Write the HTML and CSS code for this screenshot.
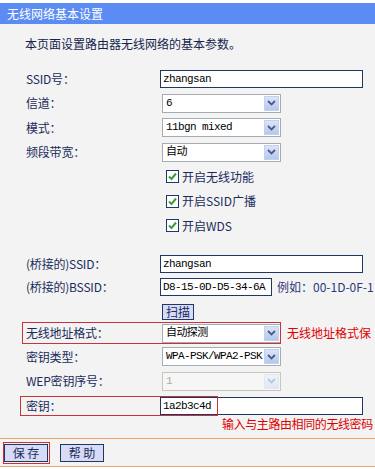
FILE: index.html
```html
<!DOCTYPE html>
<html>
<head lang="zh-CN">
    <meta charset="UTF-8">
    <title>无线网络基本设置</title>
    <link rel="stylesheet" href="styles.css">
</head>
<body>
    <div id="page">
        <div class="title">无线网络基本设置</div>
        <p class="intro">本页面设置路由器无线网络的基本参数。</p>

        <div class="form">
            <div class="row"><span class="label">SSID号：</span><span class="input wide mono">zhangsan</span></div>
            <div class="row"><span class="label">信道：</span>
                <span class="select mono"><span class="val">6</span><span class="arrow"><svg width="9" height="6" viewBox="0 0 9 6"><path d="M1 1L4.5 4.5L8 1" fill="none" stroke="#4a5d88" stroke-width="1.8"/></svg></span></span>
            </div>
            <div class="row"><span class="label">模式：</span>
                <span class="select mono"><span class="val">11bgn mixed</span><span class="arrow"><svg width="9" height="6" viewBox="0 0 9 6"><path d="M1 1L4.5 4.5L8 1" fill="none" stroke="#4a5d88" stroke-width="1.8"/></svg></span></span>
            </div>
            <div class="row"><span class="label">频段带宽：</span>
                <span class="select mono"><span class="val">自动</span><span class="arrow"><svg width="9" height="6" viewBox="0 0 9 6"><path d="M1 1L4.5 4.5L8 1" fill="none" stroke="#4a5d88" stroke-width="1.8"/></svg></span></span>
            </div>
            <div class="row"><span class="label"></span>
                <span class="check"><span class="box"><svg width="11" height="11" viewBox="0 0 11 11"><path d="M2 5.5L4.5 8L9 2.5" fill="none" stroke="#3d9b3d" stroke-width="2"/></svg></span>开启无线功能</span>
            </div>
            <div class="row"><span class="label"></span>
                <span class="check"><span class="box"><svg width="11" height="11" viewBox="0 0 11 11"><path d="M2 5.5L4.5 8L9 2.5" fill="none" stroke="#3d9b3d" stroke-width="2"/></svg></span>开启SSID广播</span>
            </div>
            <div class="row"><span class="label"></span>
                <span class="check"><span class="box"><svg width="11" height="11" viewBox="0 0 11 11"><path d="M2 5.5L4.5 8L9 2.5" fill="none" stroke="#3d9b3d" stroke-width="2"/></svg></span>开启WDS</span>
            </div>

            <div class="spacer"></div>

            <div class="row r24"><span class="label">(桥接的)SSID：</span><span class="input wide mono">zhangsan</span></div>
            <div class="row r22"><span class="label">(桥接的)BSSID：</span><span class="input short mono">D8-15-0D-D5-34-6A</span><span class="note">例如：00-1D-0F-1</span></div>
            <div class="row scan"><span class="label"></span><button class="btn small">扫描</button></div>
            <div class="row r22">
                <span class="mark addr"></span>
                <span class="label">无线地址格式：</span>
                <span class="select mono"><span class="val">自动探测</span><span class="arrow"><svg width="9" height="6" viewBox="0 0 9 6"><path d="M1 1L4.5 4.5L8 1" fill="none" stroke="#4a5d88" stroke-width="1.8"/></svg></span></span>
                <span class="warn">无线地址格式保</span>
            </div>
            <div class="row r25"><span class="label">密钥类型：</span>
                <span class="select mono"><span class="val">WPA-PSK/WPA2-PSK</span><span class="arrow"><svg width="9" height="6" viewBox="0 0 9 6"><path d="M1 1L4.5 4.5L8 1" fill="none" stroke="#4a5d88" stroke-width="1.8"/></svg></span></span>
            </div>
            <div class="row r24"><span class="label">WEP密钥序号：</span>
                <span class="select mono disabled"><span class="val">1</span><span class="arrow"><svg width="9" height="6" viewBox="0 0 9 6"><path d="M1 1L4.5 4.5L8 1" fill="none" stroke="#b9c6dc" stroke-width="1.8"/></svg></span></span>
            </div>
            <div class="row key">
                <span class="mark keymark"></span>
                <span class="label">密钥：</span><span class="input wide mono">1a2b3c4d</span>
            </div>
            <div class="row hint"><span class="label"></span><span class="warn">输入与主路由相同的无线密码</span></div>
        </div>

        <div class="bar">
            <span class="hl"><button class="btn">保 存</button></span>
            <button class="btn">帮 助</button>
        </div>
    </div>
</body>
</html>
```

FILE: styles.css
```css
*{
    margin:0;
    padding:0;
    box-sizing:border-box;
}
body{
    width:375px;
    height:469px;
    overflow:hidden;
    background:#fff;
    font:12px/16px "Noto Sans CJK SC","Liberation Sans",sans-serif;
    color:#1b2c5c;
}
#page{
    background:#f3f3f3;
    border-top:3px solid #fff;
}
.title{
    height:21px;
    line-height:21px;
    padding-left:7px;
    background:#5b8cf3;
    color:#fff;
}
.intro{
    height:42.5px;
    padding:12px 0 0 25px;
    color:#15244c;
}
.form{
    padding-left:26px;
    white-space:nowrap;
}
.row{
    position:relative;
    display:flex;
    align-items:center;
    height:24.5px;
}
.row > *{flex:none;}
.r22{height:22px;}
.r24{height:24px;}
.r25{height:25px;}
.scan{
    height:24.5px;
    padding-top:3.5px;
}
.key{
    height:20px;
    margin-top:3px;
}
.hint{height:16px;}
.spacer{height:13.5px;}
.label{
    width:134px;
    letter-spacing:-0.2px;
}
.mono{
    font-family:"Liberation Mono","Noto Sans CJK SC",monospace;
    font-size:11px;
    letter-spacing:-0.6px;
    color:#000;
}
.input{
    height:18px;
    line-height:16px;
    padding-left:2px;
    border:1px solid #1f3763;
    background:#fff;
}
.wide{width:203px;}
.short{width:112px;}
.select{
    display:flex;
    width:119px;
    height:19px;
    margin-left:2px;
    border:1px solid #a5acb2;
    background:#fff;
}
.select .val{
    flex:1;
    overflow:hidden;
    padding-left:3px;
    line-height:17px;
}
.select .arrow{
    display:flex;
    align-items:center;
    justify-content:center;
    flex:none;
    width:15px;
    margin:1px;
    border:1px solid #c3d1ee;
    background:linear-gradient(#dbe5f9,#b4c7ed);
}
.disabled{
    border-color:#c9c7ba;
    background:#f6f6f6;
    color:#aaa;
}
.disabled .arrow{
    border-color:#e0e6f2;
    background:linear-gradient(#f0f3fa,#e1e8f5);
}
.check{
    display:flex;
    align-items:center;
    gap:3px;
    margin-left:6px;
}
.box{
    display:flex;
    align-items:center;
    justify-content:center;
    width:13px;
    height:13px;
    border:1px solid #1f3763;
    background:#fff;
}
.note{
    margin-left:5px;
    color:#2a3a7a;
}
.warn{
    margin-left:6px;
    color:#e00000;
}
.hint .warn{
    margin-left:62px;
    letter-spacing:-0.4px;
}
.btn{
    width:44px;
    height:18px;
    font:12px/16px "Noto Sans CJK SC","Liberation Sans",sans-serif;
    color:#1b2c5c;
    background:#d7dbf6;
    border:1px solid #1f3763;
}
.btn.small{
    width:32px;
    height:16px;
    line-height:14px;
    margin-left:2px;
}
/* red annotation boxes drawn over the rows */
.mark{
    position:absolute;
    top:0;
    border:1px solid #c8323c;
    pointer-events:none;
}
.addr{
    left:-4px;
    width:259px;
    height:22px;
}
.keymark{
    left:-6px;
    width:198px;
    height:20px;
}
.bar{
    display:flex;
    align-items:center;
    gap:10px;
    height:29px;
    margin-top:6px;
    padding-left:3px;
    border-top:1px solid #eba46a;
    border-bottom:1px solid #eba46a;
}
.hl{
    display:flex;
    border:1px solid #c8323c;
    padding:1px 1px 1px 0;
}
```
